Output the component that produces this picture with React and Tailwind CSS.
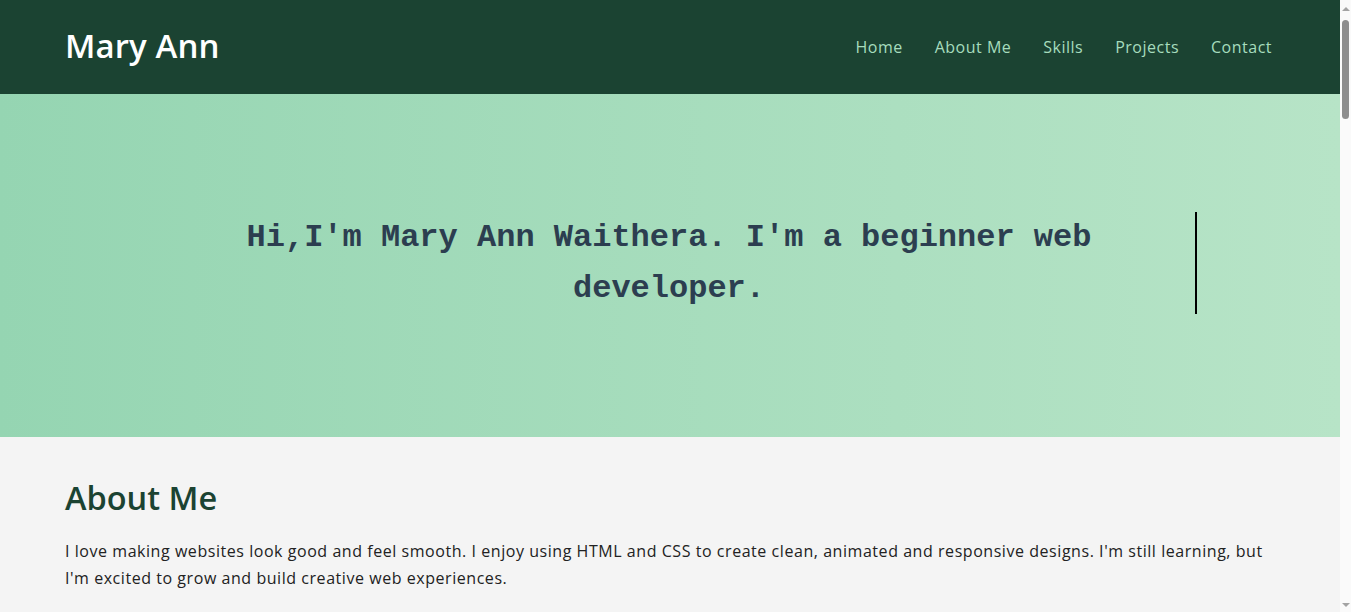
export default function App() {
  const links = ["Home", "About Me", "Skills", "Projects", "Contact"];

  return (
    <div className="flex h-screen overflow-hidden">
      <main
        className="flex-1 overflow-hidden bg-[#f4f4f4] text-[#222]"
        style={{ fontFamily: '"Open Sans", "Noto Sans", sans-serif' }}
      >
        {/* Header */}
        <header className="h-[94px] bg-[#1b4332] flex items-center justify-between pl-[65px] pr-[68px]">
          <h1 className="text-[33px] font-semibold text-white tracking-[0.1px] mt-[-2px]">Mary Ann</h1>
          <nav className="flex gap-8">
            {links.map((l) => (
              <a key={l} href="#" className="text-[16px] tracking-[0.5px] text-[#a6dcbd]">
                {l}
              </a>
            ))}
          </nav>
        </header>

        {/* Hero */}
        <section className="h-[343px] flex items-center justify-center bg-gradient-to-r from-[#95d5b2] to-[#b7e4c7]">
          <h2
            className="w-[1054px] border-r-2 border-black text-center text-[32px] font-bold leading-[51px] text-[#2c3e50] mt-[-6px]"
            style={{ fontFamily: '"Liberation Mono", "Courier New", monospace' }}
          >
            Hi,I'm Mary Ann Waithera. I'm a beginner web developer.
          </h2>
        </section>

        {/* About */}
        <section className="px-[65px] pt-[37px] pb-40">
          <h2 className="text-[32.5px] font-semibold text-[#1b4332] leading-[48px]">About Me</h2>
          <p className="mt-[16px] text-[16px] leading-[27px] tracking-[0.55px] text-[#222]">
            I love making websites look good and feel smooth. I enjoy using HTML and CSS to create clean, animated and responsive designs. I'm still learning, but I'm excited to grow and build creative web experiences.
          </p>
        </section>
      </main>

      {/* Scrollbar */}
      <aside className="w-[11px] shrink-0 bg-[#fafafa] flex flex-col items-center">
        <div className="mt-[7px] w-0 h-0 border-l-[4px] border-r-[4px] border-b-[4px] border-l-transparent border-r-transparent border-b-[#a3a3a3]"></div>
        <div className="mt-[9px] w-[7px] h-[99px] rounded-full bg-[#8d8d8d]"></div>
        <div className="flex-1"></div>
        <div className="mb-[5px] w-0 h-0 border-l-[4px] border-r-[4px] border-t-[4px] border-l-transparent border-r-transparent border-t-[#a3a3a3]"></div>
      </aside>
    </div>
  );
}
